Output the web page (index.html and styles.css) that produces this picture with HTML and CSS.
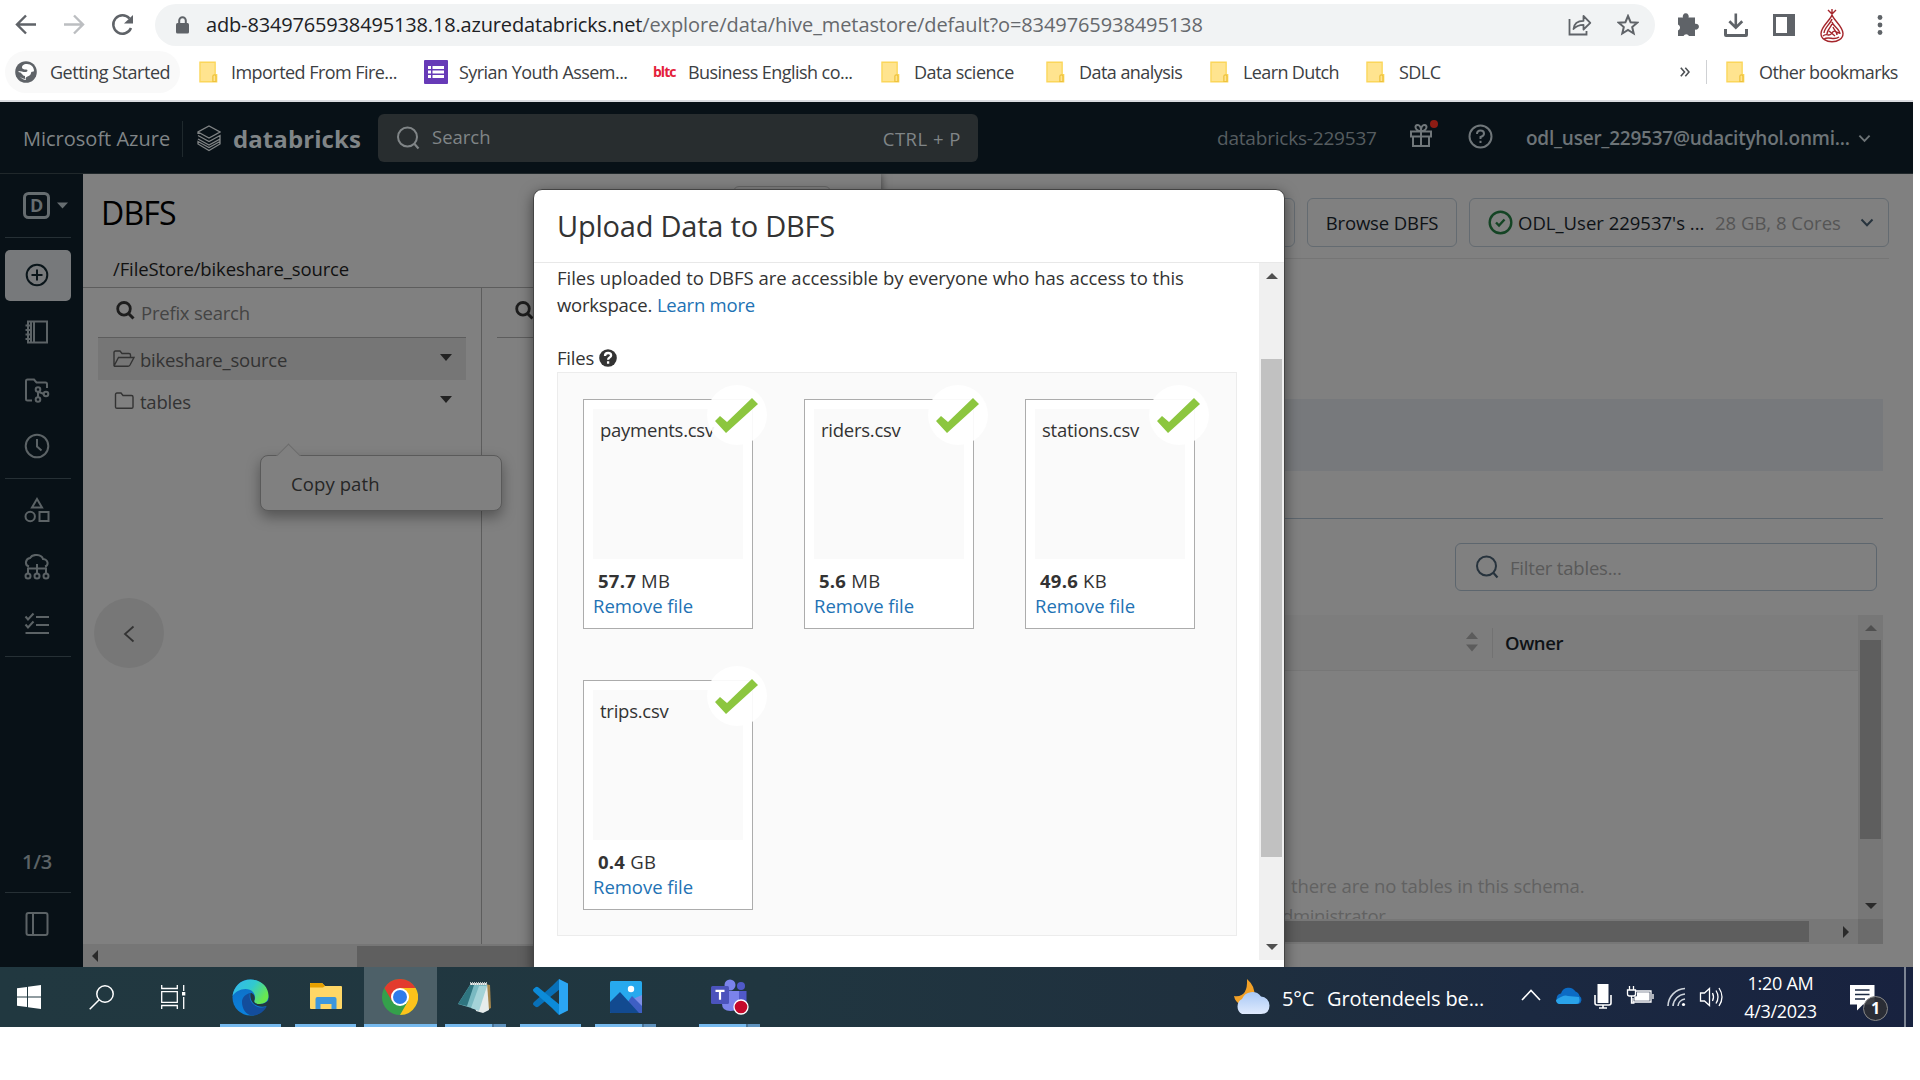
FILE: index.html
```html
<!DOCTYPE html>
<html lang="en">
<head>
<meta charset="utf-8">
<title>Upload Data to DBFS</title>
<link rel="stylesheet" href="styles.css">
</head>
<body>
<svg class="defs" width="0" height="0" aria-hidden="true">
  <symbol id="folder" viewBox="0 0 20 22"><path d="M1 .7h16v13h1.6v7.6H1z" fill="#ffe48f" stroke="#fbd65a" stroke-width="1.4"/><path d="M14.6 21v-5.5q0-1.4 1.6-1.4t1.6 1.4V21z" fill="#ffe48f" stroke="#eec23c" stroke-width="1.3"/></symbol>
  <symbol id="tick" viewBox="0 0 60 60"><circle cx="30" cy="30" r="30" fill="#fff" fill-opacity=".93"/><path d="M8 36l5-5 7 6 25-24 6 6-32 29z" fill="#8cc63f"/></symbol>
  <symbol id="loupe" viewBox="0 0 24 24"><circle cx="11.500" cy="11" r="9.500" fill="none" stroke="currentColor" stroke-width="2"/><path d="M18.500 18l4 4.500" stroke="currentColor" stroke-width="2.200"/></symbol>
  <symbol id="bold-loupe" viewBox="0 0 19 19"><circle cx="8" cy="7.800" r="6.300" fill="none" stroke="currentColor" stroke-width="2.800"/><path d="M12.500 12.500l5 5" stroke="currentColor" stroke-width="3"/></symbol>
  <symbol id="chev" viewBox="0 0 14 9"><path d="M1.500 1.500L7 7.200l5.500-5.700" fill="none" stroke="currentColor" stroke-width="2"/></symbol>
</svg>

<div class="window">
  <div class="toolbar">
    <svg class="nav-icons" width="150" height="50" viewBox="0 0 150 50" fill="none">
      <path d="M36 24.500H17.500M26 15.500l-9 9 9 9" stroke="#5f6368" stroke-width="2.400"/>
      <path d="M64 24.500h18.500M74 15.500l9 9-9 9" stroke="#bcbec1" stroke-width="2.400"/>
      <path d="M129.500 18.500A9.200 9.200 0 1 0 131 28" stroke="#5f6368" stroke-width="2.500"/><path d="M133 15v8.500h-9z" fill="#5f6368"/>
    </svg>
    <div class="omnibox">
      <svg width="13" height="18" viewBox="0 0 13 18"><path d="M3.200 8V4.500a3.300 3.300 0 0 1 6.600 0V8" fill="none" stroke="#5f6368" stroke-width="2"/><rect y="7" width="13" height="10.500" rx="1.500" fill="#5f6368"/></svg>
      <span class="url"><b>adb-8349765938495138.18.azuredatabricks.net</b>/explore/data/hive_metastore/default?o=8349765938495138</span>
      <svg class="share" width="24" height="22" viewBox="0 0 24 22" fill="none" stroke="#5f6368" stroke-width="1.800"><path d="M1.500 5v15.500h17V17"/><path d="M5.500 15c.5-5 4-8.200 10-8.200V2l6.800 6.800-6.800 6.700v-4.700c-4.500 0-7.500 1.200-10 4.200z" stroke-linejoin="round"/></svg>
      <svg class="star" width="22" height="22" viewBox="0 0 22 22"><path d="M11 2l2.600 6.200 6.600.5-5 4.300 1.500 6.500L11 16l-5.700 3.500L6.800 13l-5-4.300 6.600-.5z" fill="none" stroke="#5f6368" stroke-width="2"/></svg>
    </div>
    <svg class="ext-icons" width="250" height="50" viewBox="0 0 250 50" fill="#5f6368">
      <path d="M23 17.500h5a3 3 0 1 1 5.500 0H40v6.300a3 3 0 1 1 0 5.700V36h-6a3 3 0 0 0-5.500 0H23v-5.500a3.200 3.200 0 0 0 0-6z"/>
      <path d="M79.500 13.500h2.600v11l4.200-4.200 1.900 1.900-7.400 7.400-7.400-7.400 1.900-1.900 4.200 4.200zM69 29h3v5h18v-5h3v6q0 2-2 2H71q-2 0-2-2z"/>
      <path fill-rule="evenodd" d="M118 14h22v22h-22zm3 3v16h11V17z"/>
      <g fill="none" stroke="#a5262c" stroke-width="1.400"><path d="M177 15c-1.500 5-11 11.500-11 18.500 0 11 22 11 22 0 0-7-9.500-13.500-11-18.500zM177 19c-1 4-8 9-8 14M177 22c1 4 8 7 8 12M177 24c-1 3-5 6-5 10M178 27c1 3 4 5 4 8M168 36c4-4 6 2 9-3s5 2 8-1M169 39c5-3 10 2 15-2M173 10l4 4 4-4M177 9v4M174 31l6 5"/></g>
      <circle cx="225" cy="17.500" r="2.400"/><circle cx="225" cy="25" r="2.400"/><circle cx="225" cy="32.500" r="2.400"/>
    </svg>
  </div>

  <div class="bookmarks">
    <div class="bm first"><svg width="22" height="22" viewBox="0 0 22 22"><circle cx="11" cy="11" r="10.800" fill="#5f6368"/><path d="M12 3c-4 0-5 2-5 3.500s2 2 4 2 2 2 0 2.500-5-1-7.500-1c0 5 3.500 9 7.500 9-1-2 0-3 1.500-3.500S16 14 16 12s3-1 3-2c0-4-3-7-7-7z" fill="#fff"/><path d="M7 4q-4 3-4 7 3 0 4 2t3 2v3q-6-1-8-7" fill="#5f6368"/></svg><span>Getting Started</span></div>
    <div class="bm b2"><svg width="19" height="22"><use href="#folder"/></svg><span>Imported From Fire...</span></div>
    <div class="bm b3"><svg width="24" height="24" viewBox="0 0 24 24"><rect width="24" height="24" rx="1" fill="#673ab7"/><path d="M4 6h3v3H4zm0 4.500h3v3H4zM4 15h3v3H4zM8.500 6H20v3H8.500zm0 4.500H20v3H8.500zm0 4.500H20v3H8.500z" fill="#fff"/></svg><span>Syrian Youth Assem...</span></div>
    <div class="bm b4"><i class="bltc">bltc</i><span>Business English co...</span></div>
    <div class="bm b5"><svg width="19" height="22"><use href="#folder"/></svg><span>Data science</span></div>
    <div class="bm b6"><svg width="19" height="22"><use href="#folder"/></svg><span>Data analysis</span></div>
    <div class="bm b7"><svg width="19" height="22"><use href="#folder"/></svg><span>Learn Dutch</span></div>
    <div class="bm b8"><svg width="19" height="22"><use href="#folder"/></svg><span>SDLC</span></div>
    <svg class="more" width="10" height="10" viewBox="0 0 10 10"><path d="M.8.800L4.500 5 .8 9.200M5.300.800L9 5 5.300 9.200" fill="none" stroke="#4c5054" stroke-width="1.600"/></svg>
    <div class="bm b9"><svg width="19" height="22"><use href="#folder"/></svg><span>Other bookmarks</span></div>
  </div>

  <div class="app-header">
    <span class="azure">Microsoft Azure</span>
    <div class="brand">
      <svg width="24" height="27" viewBox="0 0 24 27" fill="none" stroke="#808485" stroke-width="1.300"><path d="M1 9V7l11-6 11 6-11 6L1 7M1 10.500l11 6 11-6v3.500l-11 6-11-6M23 14v5l-11 6.500L1 19v-2.500l11 6 11-6"/></svg>
      <span>databricks</span>
    </div>
    <div class="search"><svg width="24" height="24"><use href="#loupe"/></svg><span class="s1">Search</span><span class="s2">CTRL + P</span></div>
    <span class="workspace">databricks-229537</span>
    <svg class="gift" width="30" height="30" viewBox="0 0 30 30"><path d="M2 11.500h20v5H2zM4 16.500h16V26H4zM12 11.500V26M12 11C6 11 5 5 8.500 5S12 11 12 11s0-6 3.500-6S18 11 12 11z" fill="none" stroke="#70777a" stroke-width="2"/><circle cx="25" cy="4" r="4" fill="#8e1c14"/></svg>
    <svg class="help" width="25" height="25" viewBox="0 0 25 25" fill="none" stroke="#70777a" stroke-width="2"><circle cx="12.500" cy="12.500" r="11"/><path d="M9 10q0-3.500 3.500-3.500T16 9.700q0 2-3.500 3.300v2"/><path d="M12.500 16.800v2.200"/></svg>
    <span class="user">odl_user_229537@udacityhol.onmi...</span>
    <svg class="uchev" width="13" height="9"><use href="#chev"/></svg>
  </div>

  <div class="content">
    <div class="sidebar">
      <div class="persona"><svg width="48" height="28" viewBox="0 0 48 28"><rect x="1.500" y="1.500" width="24" height="24" rx="4" fill="none" stroke="#666d70" stroke-width="3"/><path d="M34 10.500h11l-5.500 6z" fill="#666d70"/></svg><b>D</b></div>
      <div class="rule r1"></div>
      <div class="active"><svg width="24" height="24" viewBox="0 0 24 24" fill="none" stroke="#0a151a" stroke-width="2"><circle cx="12" cy="12" r="10.300"/><path d="M12 6.500v11M6.500 12h11"/></svg></div>
      <svg class="ic i1" width="26" height="26" viewBox="0 0 26 26"><path d="M4 2.500h19v21H4zM10 2.500v21M1.500 6.500h5.500M1.500 11h5.500M1.500 15.500h5.500M1.500 20h5.500M7 2.500v21"/></svg>
      <svg class="ic i2" width="26" height="26" viewBox="0 0 26 26"><path d="M8 23.500H3.500q-1.500 0-1.500-1.500V4q0-1.500 1.500-1.500H10l2.500 3h9q1.500 0 1.500 1.500v4"/><circle cx="14" cy="12.500" r="2.300"/><circle cx="22" cy="17" r="2.300"/><circle cx="14" cy="22.500" r="2.300"/><path d="M14 15v5M15 15l5 2"/></svg>
      <svg class="ic i3" width="26" height="26" viewBox="0 0 26 26"><circle cx="13" cy="13" r="11.300"/><path d="M13 6v7.500l4.500 4"/></svg>
      <div class="rule r2"></div>
      <svg class="ic i4" width="26" height="27" viewBox="0 0 26 27"><path d="M13 3l5 8.500H8z"/><circle cx="6.200" cy="20.500" r="4.700"/><path d="M15.500 16h9v9h-9z"/></svg>
      <svg class="ic i5" width="26" height="26" viewBox="0 0 26 26"><path d="M5 12.500q-3.500-1-3-4.500t4-4q2-3.500 7-3t6 4q4 .5 4.500 3.500T21 12.500M13 10v9M4 19v-4.500h18V19"/><circle cx="4" cy="22" r="2.500"/><circle cx="13" cy="22" r="2.500"/><circle cx="22" cy="22" r="2.500"/></svg>
      <svg class="ic i6" width="26" height="26" viewBox="0 0 26 26"><path d="M1.500 5.500l2.500 3 5.500-6M12 6h13M1.500 13.500l2.500 3 5.500-6M12 14h13M1.500 22h23.500"/></svg>
      <div class="rule r3"></div>
      <span class="count">1/3</span>
      <div class="rule r4"></div>
      <svg class="ic i7" width="26" height="26" viewBox="0 0 26 26"><rect x="2.500" y="2" width="21" height="22" rx="2"/><path d="M9 2v22"/></svg>
    </div>

    <div class="dbfs">
      <div class="dbfs-head"><span class="dbfs-title">DBFS</span><div class="ghost"></div></div>
      <div class="path"><span>/FileStore/bikeshare_source</span></div>
      <div class="columns">
        <div class="col">
          <div class="prefix"><svg width="19" height="19"><use href="#bold-loupe"/></svg><span>Prefix search</span></div>
          <div class="row sel"><svg width="22" height="18" viewBox="0 0 22 18"><path d="M1 16V2.500Q1 1 2.500 1H7l2 2.500h7q1.500 0 1.500 1.500v2M1 16L5.500 7.500H21L17 15q-.8 1.300-2 1.300H2Q1 16.300 1 15"/></svg><span>bikeshare_source</span><i class="caret"></i></div>
          <div class="row"><svg width="22" height="18" viewBox="0 0 22 18"><path d="M2.500 15V2.500Q2.500 1 4 1h4l2 2.500h8.500Q20 3.500 20 5v10q0 1.300-1.500 1.300H4Q2.500 16.300 2.500 15z"/></svg><span>tables</span><i class="caret"></i></div>
        </div>
        <div class="col2"><div class="prefix"><svg width="19" height="19"><use href="#bold-loupe"/></svg></div></div>
      </div>
      <div class="hbar"><i class="arrow-l"></i><div class="hthumb"></div></div>
      <div class="popover"><span>Copy path</span></div>
      <div class="back"><svg width="12" height="18" viewBox="0 0 12 18"><path d="M10.500 1.500L2 9l8.500 7.500" fill="none" stroke="#333" stroke-width="1.800"/></svg></div>
    </div>

    <div class="explorer">
      <div class="actions">
        <div class="btn stub"></div>
        <div class="btn browse"><span>Browse DBFS</span></div>
        <div class="btn cluster"><svg width="25" height="25" viewBox="0 0 25 25" fill="none" stroke="#144424" stroke-width="2.400"><circle cx="12.500" cy="12.500" r="10.800"/><path d="M8 12.500l3 3 5.500-6"/></svg><span class="cname">ODL_User 229537's ...</span><span class="cmeta">28 GB, 8 Cores</span><svg class="cchev" width="14" height="9"><use href="#chev"/></svg></div>
      </div>
      <div class="banner"></div>
      <div class="tabs-line"></div>
      <div class="filter"><svg width="24" height="24"><use href="#loupe"/></svg><span>Filter tables...</span></div>
      <div class="table">
        <div class="tmain">
          <div class="thead"><i class="sorter"><svg width="12" height="20" viewBox="0 0 12 20"><path d="M0 7L6 0l6 7zM0 12.500h12l-6 7z" fill="#5c5c5c"/></svg></i><span>Owner</span></div>
          <div class="empty"><div><span>there are no tables in this schema.</span></div><div class="e2"><span>dministrator</span></div></div>
        </div>
        <div class="vbar"><i class="arrow-u"></i><div class="vthumb"></div><i class="arrow-d"></i></div>
        <div class="tbar"><div class="tthumb"></div><i class="arrow-r"></i></div>
        <div class="corner"></div>
      </div>
    </div>

    <div class="modal">
      <div class="modal-head"><span>Upload Data to DBFS</span></div>
      <div class="modal-body">
        <div class="form">
          <p><span class="d1">Files uploaded to DBFS are accessible by everyone who has access to this</span><br><span class="d2">workspace.</span> <a class="d3">Learn more</a></p>
          <div class="label"><span>Files</span><svg width="18" height="18" viewBox="0 0 18 18"><circle cx="9" cy="9" r="8.800" fill="#333"/><path d="M6 7q0-3 3.100-3 3 0 3 2.500c0 1.900-3 2-3 4.300M9.100 12.300v2.400" fill="none" stroke="#fff" stroke-width="2.300"/></svg></div>
          <div class="dropzone">
            <div class="file"><div class="thumb"><span>payments.csv</span></div><div class="size"><b>57.7</b> MB</div><a class="remove">Remove file</a><svg class="ok"><use href="#tick"/></svg></div>
            <div class="file"><div class="thumb"><span>riders.csv</span></div><div class="size"><b>5.6</b> MB</div><a class="remove">Remove file</a><svg class="ok"><use href="#tick"/></svg></div>
            <div class="file"><div class="thumb"><span>stations.csv</span></div><div class="size"><b>49.6</b> KB</div><a class="remove">Remove file</a><svg class="ok"><use href="#tick"/></svg></div>
            <div class="file"><div class="thumb"><span>trips.csv</span></div><div class="size"><b>0.4</b> GB</div><a class="remove">Remove file</a><svg class="ok"><use href="#tick"/></svg></div>
          </div>
        </div>
        <div class="mbar"><i class="arrow-u"></i><div class="mthumb"></div><i class="arrow-d"></i></div>
      </div>
    </div>
  </div>

  <div class="taskbar">
    <div class="tile t1"><svg width="24" height="24" viewBox="0 0 24 24" fill="#fff"><path d="M0 3.300l10-1.300v9.500H0zM11 1.800L24 0v11.500H11zM0 12.500h10V22L0 20.700zM11 12.500h13V24l-13-1.800z"/></svg></div>
    <div class="tile t2"><svg width="25" height="25" viewBox="0 0 25 25" fill="none" stroke="#fff" stroke-width="1.500"><circle cx="16" cy="9" r="8.200"/><path d="M10 15L.7 24.300"/></svg></div>
    <div class="tile t3"><svg width="25" height="24" viewBox="0 0 25 24" fill="none" stroke="#fff" stroke-width="1.300"><path d="M.7 0v3.500h15.600V0M.7 6.700h15.600v10.600H.7zM.7 24v-3.500h15.600V24M22.700 0v6M22.700 12v12"/><path d="M21 7h3.300v3.500H21z" fill="#fff" stroke="none"/></svg></div>
    <div class="tile t4 run"><svg width="37" height="37" viewBox="0 0 37 37"><defs><linearGradient id="eg" x1="0" y1="0" x2="1" y2=".5"><stop offset="0" stop-color="#35b6f0"/><stop offset=".55" stop-color="#31c9cf"/><stop offset="1" stop-color="#68e84f"/></linearGradient><linearGradient id="eb" x1="0" y1="0" x2="0" y2="1"><stop offset="0" stop-color="#0f6cc4"/><stop offset="1" stop-color="#0a82dc"/></linearGradient></defs><circle cx="18.500" cy="18.500" r="18" fill="url(#eb)"/><path d="M.5 17C2 7 9 .5 18.500.500 28 .5 36.500 7 36.500 17c0 5-4 8-8.500 8-5 0-6.500-2-5.500-4 2-4-1-11-9-11C8 10 3 13 .5 17z" fill="url(#eg)"/><path d="M10 23c0-5 4-8 8-9-2 8 4 14.500 12 14.500 2 0 4-1 5-1.500-3 6-9 9.500-14 9.500-7 0-11-7-11-13.500z" fill="#134d9c"/><path d="M18.500 14c3 0 5 3.500 4 7-1 2 .5 4 5.500 4 4 0 7-2 8.500-4l1 6-2.500 0c-9 3-18-3-16.500-13z" fill="#223840"/></svg></div>
    <div class="tile t5 run"><svg width="32" height="28" viewBox="0 0 32 28"><path d="M0 0h12l3 3h16q1 0 1 1v21q0 1-1 1H1q-1 0-1-1z" fill="#ffd766"/><path d="M0 1q0-1 1-1h11l3 3-2 1.500H0z" fill="#e6a000"/><path d="M5.500 26V16q0-2 2-2h17q2 0 2 2v10h-5v-5h-11v5z" fill="#3d97dd"/></svg></div>
    <div class="tile t6 run"><svg width="36" height="36" viewBox="0 0 36 36"><circle cx="18" cy="18" r="18" fill="#34a04b"/><path d="M2.400 9A18 18 0 0 1 33.600 9H18L10.200 22.500z" fill="#e33b2e"/><path d="M33.600 9A18 18 0 0 1 18 36l7.800-13.500L18 9z" fill="#fcc21b"/><circle cx="18" cy="18" r="9" fill="#fff"/><circle cx="18" cy="18" r="7" fill="#2f7bea"/></svg></div>
    <div class="tile t7 run"><svg width="34" height="33" viewBox="0 0 34 33"><path d="M27 3l5 1 1 23-4 2z" fill="#a5864d"/><path d="M12 2h17l2 27-6 3-7-2z" fill="#e6ecec"/><path d="M12 4h17l-9 25L0 23z" fill="#79b9c1"/><path d="M12 4h4L9 25l-9-2z" fill="#2f7580"/><path d="M21 5h8l-8 25-8-3z" fill="#a4d3d8"/><path d="M12 2.500h18" stroke="#b9c2c2" stroke-width="3" stroke-dasharray="1 1"/></svg><i></i></div>
    <div class="tile t8 run"><svg width="36" height="36" viewBox="0 0 36 36"><path d="M27 0l-7 7L2 23q-2 2 0 3.500l1.500 1.300q1.500 1 3-.3L28 10z" fill="#0870b8"/><path d="M27 36l-7-7L2 13q-2-2 0-3.500l1.500-1.300q1.500-1 3 .3L28 26z" fill="#0c8bd9"/><path d="M27 0l9 4.500v27L27 36z" fill="#2ba5f3"/></svg></div>
    <div class="tile t9 run"><svg width="32" height="32" viewBox="0 0 32 32"><rect width="32" height="32" rx="1.500" fill="#27a9ee"/><path d="M32 14v16L18 20z" fill="#7d8ee6"/><path d="M10 32l12-17 10 10v7z" fill="#3e5fc4"/><path d="M0 21L10 11l19 21H1q-1 0-1-1z" fill="#124a90"/><circle cx="21" cy="8" r="3.200" fill="#fff"/></svg><i></i></div>
    <div class="tile t10 run"><svg width="38" height="36" viewBox="0 0 38 36"><circle cx="19" cy="6" r="5.500" fill="#7b83eb"/><circle cx="30" cy="7" r="4" fill="#5059c9"/><path d="M24 12h11.500v13q-4 4-9 2z" fill="#5059c9"/><path d="M11 12h17v12q0 8-8.500 8T11 25z" fill="#7b83eb"/><rect y="7" width="18" height="18" rx="1.500" fill="#4b53bc"/><path d="M4.500 11.800h9M9 11.800v9" stroke="#fff" stroke-width="2.200"/><circle cx="30" cy="28" r="7" fill="#c4092b" stroke="#fff" stroke-width="1.300"/></svg><i></i></div>
    <div class="weather"><svg width="37" height="36" viewBox="0 0 37 36"><defs><linearGradient id="cl" x1="0" y1="0" x2="0" y2="1"><stop offset="0" stop-color="#a9c8f5"/><stop offset="1" stop-color="#dfeafd"/></linearGradient></defs><path d="M14 0q9 8 7 17t-13 9q-6-3-7-9 14 2 13-17z" fill="#f3a127"/><path d="M9 35a8.500 8.500 0 0 1 0-15 11 11 0 0 1 19-2.500 9 9 0 0 1 8.500 9q0 8.500-8.500 8.500z" fill="url(#cl)"/></svg><span class="w1">5°C</span><span class="w2">Grotendeels be...</span></div>
    <svg class="tray" width="206" height="40" viewBox="0 0 206 40" fill="none" stroke="#fff" stroke-width="1.600">
      <path d="M2 23l9-9.500 9 9.500"/>
      <g stroke="none"><path d="M40 27a5.500 5.500 0 0 1 1-10.500 8 8 0 0 1 14.500-2 6 6 0 0 1 4 4.500 4.500 4.500 0 0 1-1 8z" fill="#0c6bc4"/><path d="M36 23q8-6 12-4l11 1q2 7-3 7H39q-3-1-3-4z" fill="#2aa3ea"/></g>
      <rect x="77.500" y="7" width="11" height="19" fill="#fff" stroke="none"/><path d="M75 18v8q0 2 2 2h12q2 0 2-2v-8M83 28v3M79 31h8"/>
      <g stroke-width="1.300"><path d="M116 14h15v11h-18v-4M133 17v5"/><path d="M117.500 16h11.500v7h-14v-3h2.500z" fill="#fff"/><path d="M109.500 9v4M113.500 9v4M107.500 13h8v4q0 2-2 2h-4q-2 0-2-2zM111.500 19v7h3"/></g>
      <path d="M148 29A18 18 0 0 1 165 11.500M153 29a13 13 0 0 1 12-12M158 29a8 8 0 0 1 7-7" stroke="#cfd5dc"/><circle cx="163.500" cy="27.500" r="1.600" fill="#fff" stroke="none"/>
      <path stroke-width="1.300" d="M180.500 16v8h4l5 4.500v-17l-5 4.500zM192.500 16q2 4 0 8M196 13.500q4 6.500 0 13M199 11q6 9 0 18"/>
    </svg>
    <div class="clock"><span>1:20 AM</span><span>4/3/2023</span></div>
    <div class="notice"><svg width="25" height="26" viewBox="0 0 25 26"><path d="M0 0h24.500v19.500H13l-6 6v-6H0z" fill="#fff"/><path d="M5 5h14.500M5 9.500h14.500M5 14h10" stroke="#1b2941" stroke-width="1.300"/></svg><b>1</b></div>
    <div class="peek"></div>
  </div>
</div>
</body>
</html>
```

FILE: styles.css
```css
* { box-sizing: border-box; }
body {
  margin: 0;
  background: #fff;
  color: #333;
  font: 18.500px/1 "Open Sans", "Noto Sans", sans-serif;
  overflow: hidden;
}
span, a, b, i { white-space: nowrap; font-style: normal; }
svg { display: block; flex: none; }
.defs { position: absolute; }
.window { width: 1913px; height: 1027px; display: flex; flex-direction: column; }

/* browser chrome */
.toolbar { height: 50px; display: flex; flex: none; }
.nav-icons { width: 150px; }
.omnibox { width: 1500px; height: 42px; margin: 4px 0 0 5px; border-radius: 21px; background: #f1f3f4; display: flex; align-items: center; padding-left: 21px; flex: none; }
.url { margin-left: 17px; width: 1000px; font-size: 20px; letter-spacing: -.09px; color: #66696d; }
.url b { font-weight: 400; color: #202124; letter-spacing: -.16px; }
.share { margin-left: 362px; }
.star { margin-left: 25px; }
.bookmarks { height: 52px; border-bottom: 2px solid #dadce0; display: flex; align-items: center; padding-bottom: 7px; flex: none; font-size: 18px; letter-spacing: -.55px; color: #3c4043; }
.bm { display: flex; align-items: center; flex: none; }
.first { height: 42px; width: 175px; margin-left: 5px; padding-left: 10px; gap: 13px; border-radius: 21px; background: #f9f9f9; letter-spacing: -.48px; }
.b2 { margin-left: 19px; width: 225px; gap: 13px; }
.b3 { width: 229px; gap: 11px; }
.b4 { width: 228px; gap: 13px; }
.b5, .b6, .b7, .b8, .b9 { gap: 14px; }
.b5 { width: 165px; letter-spacing: -.5px; }
.b6 { width: 164px; }
.b7 { width: 156px; letter-spacing: -.62px; }
.b8 { width: 314px; }
.b9 { margin-left: 16px; border-left: 1px solid #cfd1d4; height: 24px; padding-left: 19px; letter-spacing: -.6px; }
.bltc { width: 22px; color: #e4213b; font-weight: 700; font-size: 14px; letter-spacing: -1px; }

/* workspace header */
.app-header { height: 71px; background: #081117; display: flex; align-items: center; flex: none; color: #808587; padding: 2px 0 0 23px; }
.azure { width: 159px; font-size: 20px; }
.brand { border-left: 1px solid #1f292d; height: 36px; display: flex; align-items: center; padding-left: 14px; gap: 12px; width: 196px; }
.brand span { font-size: 24px; font-weight: 700; letter-spacing: .08px; }
.search { width: 600px; height: 48px; border-radius: 6px; background: #282d2f; display: flex; align-items: center; padding: 0 17px 0 18px; margin-top: -1px; }
.s1 { margin: -1px 0 0 12px; }
.s2 { margin: 2px 0 0 auto; letter-spacing: .5px; }
.workspace { margin-left: 239px; width: 192px; color: #565d60; font-size: 19px; letter-spacing: -.2px; }
.gift { width: 30px; margin-top: -8px; }
.help { margin: -4px 0 0 29px; }
.user { margin-left: 33px; width: 332px; color: #6d7477; font-weight: 600; font-size: 19px; letter-spacing: -.24px; }
.uchev { color: #6d7477; }

.content { height: 794px; position: relative; display: flex; overflow: hidden; background: #808080; border-top: 1px solid #20282b; }

/* navigation rail */
.sidebar { width: 83px; background: #081117; display: flex; flex-direction: column; flex: none; padding-left: 5px; z-index: 2; }
.persona { position: relative; margin: 18px 0 0 18px; height: 28px; }
.persona b { position: absolute; left: 7px; top: 4px; font-size: 18px; color: #666d70; }
.rule { height: 1px; width: 66px; background: #263035; flex: none; }
.r1 { margin-top: 17px; }
.active { width: 66px; height: 51px; border-radius: 5px; background: #77797b; margin-top: 12px; display: flex; align-items: center; justify-content: center; padding: 0 3px 1px 0; }
.ic { margin-left: 18.500px; fill: none; stroke: #5c6366; stroke-width: 2; }
.i1 { margin-top: 18px; }
.i2 { margin-top: 32px; }
.i3 { margin-top: 30px; }
.r2 { margin-top: 19px; }
.i4 { margin-top: 17px; }
.i5 { margin-top: 31px; }
.i6 { margin-top: 31px; }
.r3 { margin-top: 19px; }
.count { margin: 195px 0 0 17px; height: 20px; color: #5c6366; font-size: 20px; font-weight: 600; letter-spacing: -.3px; }
.r4 { margin-top: 20px; }
.i7 { margin-top: 18px; }

/* file browser panel */
.dbfs { width: 798px; flex: none; position: relative; display: flex; flex-direction: column; box-shadow: 0 0 8px rgba(0,0,0,.55); z-index: 1; background: #808080; color: #2e2e2e; }
.dbfs-head { height: 74px; display: flex; padding: 23px 0 0 18px; }
.dbfs-title { font-size: 32px; color: #000; width: 632px; letter-spacing: -.8px; }
.ghost { width: 98px; height: 40px; margin-top: -11px; border: 1px solid #666; border-radius: 6px; }
.path { height: 40px; border-bottom: 1px solid #5d5d5d; padding: 12px 0 0 30px; color: #111; letter-spacing: -.12px; }
.columns { flex: 1; display: flex; }
.col { width: 399px; border-right: 1px solid #5d5d5d; padding: 0 15px; letter-spacing: -.22px; }
.prefix { height: 50px; border-bottom: 1px solid #5d5d5d; display: flex; padding: 13px 0 0 18px; gap: 6px; color: #1d1d1d; }
.prefix span { margin-top: 3px; color: #444; }
.row { height: 42px; display: flex; padding: 12px 14px 0 15px; gap: 5px; color: #333; }
.row.sel { background: #767676; }
.row span { margin-top: 1px; }
.row svg { fill: none; stroke: #333; stroke-width: 1.400; }
.row .caret { margin: 4px 0 0 auto; border: 6px solid transparent; border-top: 7px solid #222; border-bottom: 0; height: 0; }
.col2 { padding-left: 15px; flex: 1; }
.hbar { height: 23px; background: #767676; display: flex; padding: 2px 0 0 9px; }
.hthumb { margin-left: 259px; width: 524px; background: #5f5f5f; }
.popover { position: absolute; left: 177px; top: 281px; width: 242px; height: 56px; border: 1px solid #5a5a5a; border-radius: 8px; background: #808080; box-shadow: 0 6px 14px rgba(0,0,0,.35); padding: 19px 0 0 30px; color: #262626; letter-spacing: .1px; }
.popover::before { content: ""; position: absolute; left: 19px; top: -9px; width: 16px; height: 16px; background: #808080; border: solid #6c6c6c; border-width: 1px 0 0 1px; transform: rotate(45deg); }
.back { position: absolute; left: 11px; top: 424px; width: 70px; height: 70px; border-radius: 50%; background: #777; display: flex; align-items: center; justify-content: center; padding-top: 2px; }

/* scrollbar arrows */
.arrow-l { border: 6px solid transparent; border-right-color: #2a2a2a; border-left: 0; margin-top: 4px; height: 0; }
.arrow-r { border: 6px solid transparent; border-left-color: #2a2a2a; border-right: 0; }
.arrow-u { border: 6px solid transparent; border-bottom-color: #505050; border-top: 0; width: 0; }
.arrow-d { border: 6px solid transparent; border-top-color: #2a2a2a; border-bottom: 0; width: 0; }

/* catalog pane */
.explorer { flex: 1; display: flex; flex-direction: column; padding-right: 30px; color: #0e1216; }
.actions { height: 85px; border-bottom: 1px solid #757575; display: flex; justify-content: flex-end; padding-top: 24px; gap: 12px; margin-right: -6px; }
.btn { height: 49px; border: 1px solid #646b71; border-radius: 6px; display: flex; align-items: center; justify-content: center; }
.stub { width: 120px; }
.browse { width: 150px; letter-spacing: -.12px; padding-top: 1px; }
.cluster { width: 420px; justify-content: flex-start; padding-left: 18px; }
.cluster span { margin-top: 1px; }
.cluster .cname { margin-left: 5px; width: 197px; }
.cmeta { width: 145px; color: #555; }
.cchev { color: #27333d; }
.banner { height: 72px; background: #77797c; margin-top: 140px; }
.tabs-line { height: 1px; background: #5d666e; margin-top: 47px; }
.filter { width: 422px; height: 48px; border: 1px solid #5d666e; border-radius: 6px; margin: 24px 6px 0 auto; display: flex; align-items: center; padding-left: 19px; gap: 11px; color: #27333d; letter-spacing: -.2px; }
.filter span { color: #595959; margin-top: 2px; }
.table { margin-top: 24px; height: 329px; display: grid; grid-template: 304px 25px / 1fr 25px; }
.tmain { overflow: hidden; }
.thead { height: 56px; background: #7d7d7d; border-bottom: 1px solid #777; display: flex; align-items: center; padding-left: 585px; font-weight: 600; letter-spacing: -.4px; }
.sorter { width: 27px; height: 30px; border-right: 1px solid #727272; padding-top: 4px; }
.thead span { margin: 2px 0 0 12px; }
.empty { color: #626262; padding: 206px 0 0 410px; letter-spacing: -.1px; }
.e2 { margin: 11px 0 0 -9px; letter-spacing: -.35px; }
.vbar { background: #777; display: flex; flex-direction: column; align-items: center; padding-top: 10px; }
.vthumb { width: 21px; height: 199px; margin-top: 9px; background: #5e5e5e; }
.vbar .arrow-d { margin-top: 64px; }
.tbar { background: #777; display: flex; align-items: center; }
.tthumb { height: 21px; width: 928px; background: #5e5e5e; }
.tbar .arrow-r { margin-left: 34px; }
.corner { background: #6c6c6c; }

/* upload dialog */
.modal { position: absolute; z-index: 5; left: 533px; top: 15px; width: 752px; height: 790px; border: 1px solid #444; border-radius: 9px; background: #fff; box-shadow: 0 4px 14px rgba(0,0,0,.5); overflow: hidden; }
.modal-head { height: 73px; border-bottom: 1px solid #e8e8e8; padding: 21px 0 0 23px; font-size: 29px; letter-spacing: -.22px; }
.modal-body { display: flex; height: 697px; }
.form { flex: 1; padding-left: 23px; }
.form p { margin: 1px 0 0; line-height: 27px; }
.d1 { letter-spacing: -.02px; }
.d2, .d3 { letter-spacing: -.22px; }
a { color: #2272b4; }
.label { display: flex; align-items: center; gap: 5px; margin-top: 25px; height: 30px; letter-spacing: -.2px; }
.dropzone { width: 680px; height: 564px; margin-top: -1px; border: 1px solid #ececec; background: #fafafa; display: grid; grid-template-columns: repeat(3, 170px); grid-auto-rows: 230px; gap: 51px; padding: 26px 0 0 25px; }
.file { position: relative; border: 1px solid #acacac; background: #fff; padding: 9px; display: flex; flex-direction: column; letter-spacing: -.25px; }
.thumb { height: 150px; width: 150px; background: #fafafa; padding: 12px 0 0 7px; flex: none; }
.size { margin: 13px 0 0 5px; height: 25px; letter-spacing: .25px; }
.remove { letter-spacing: -.03px; }
.ok { position: absolute; left: 123px; top: -15px; width: 60px; height: 60px; }
.mbar { width: 25px; background: #f0f0f0; display: flex; flex-direction: column; align-items: center; padding-top: 10px; }
.mbar .arrow-d { border-top-color: #505050; margin-top: 87px; }
.mthumb { width: 21px; height: 498px; margin-top: 80px; background: #c1c1c1; flex: none; }

/* taskbar */
.taskbar { height: 60px; flex: none; display: flex; color: #fff; background: linear-gradient(90deg, #213840 0, #203640 40%, #1f303e 62%, #1b2941 80%, #18223f 100%); }
.tile { position: relative; display: flex; align-items: center; justify-content: center; flex: none; }
.run::after { content: ""; position: absolute; left: 0; right: 0; bottom: 0; height: 3px; background: #76b9ed; }
.run i { position: absolute; right: 0; bottom: 0; height: 3px; width: 14px; background: #5f92bd; border-left: 2px solid #4b7496; z-index: 1; }
.t1 { width: 58px; }
.t2 { width: 87px; }
.t3 { width: 57px; }
.t4 { width: 61px; margin-left: 18px; padding-right: 1px; }
.t5 { width: 61px; margin-left: 14px; }
.t6 { width: 73px; margin-left: 8px; background: #4d6068; padding-right: 2px; }
.t7 { width: 61px; margin-left: 8px; padding-right: 2px; }
.t8 { width: 61px; margin-left: 14px; padding-right: 1px; }
.t9 { width: 61px; margin-left: 14px; }
.t10 { width: 61px; margin-left: 43px; }
.weather { margin-left: 473px; display: flex; align-items: center; font-size: 20px; width: 287px; }
.weather span { margin-top: 3px; letter-spacing: -.12px; }
.weather .w1 { margin-left: 12px; width: 45px; }
.tray { margin-top: 10px; }
.clock { width: 109px; display: flex; flex-direction: column; align-items: center; padding-top: 7px; gap: 10px; font-size: 18px; letter-spacing: -.3px; }
.notice { position: relative; margin-left: 15px; padding-top: 18px; width: 54px; }
.notice b { position: absolute; left: 13px; top: 29px; width: 25px; height: 25px; border-radius: 50%; border: 1px solid #888; background: rgba(45,47,52,.92); font-size: 16px; line-height: 23px; text-align: center; }
.peek { width: 2px; background: #7c8493; }
```
